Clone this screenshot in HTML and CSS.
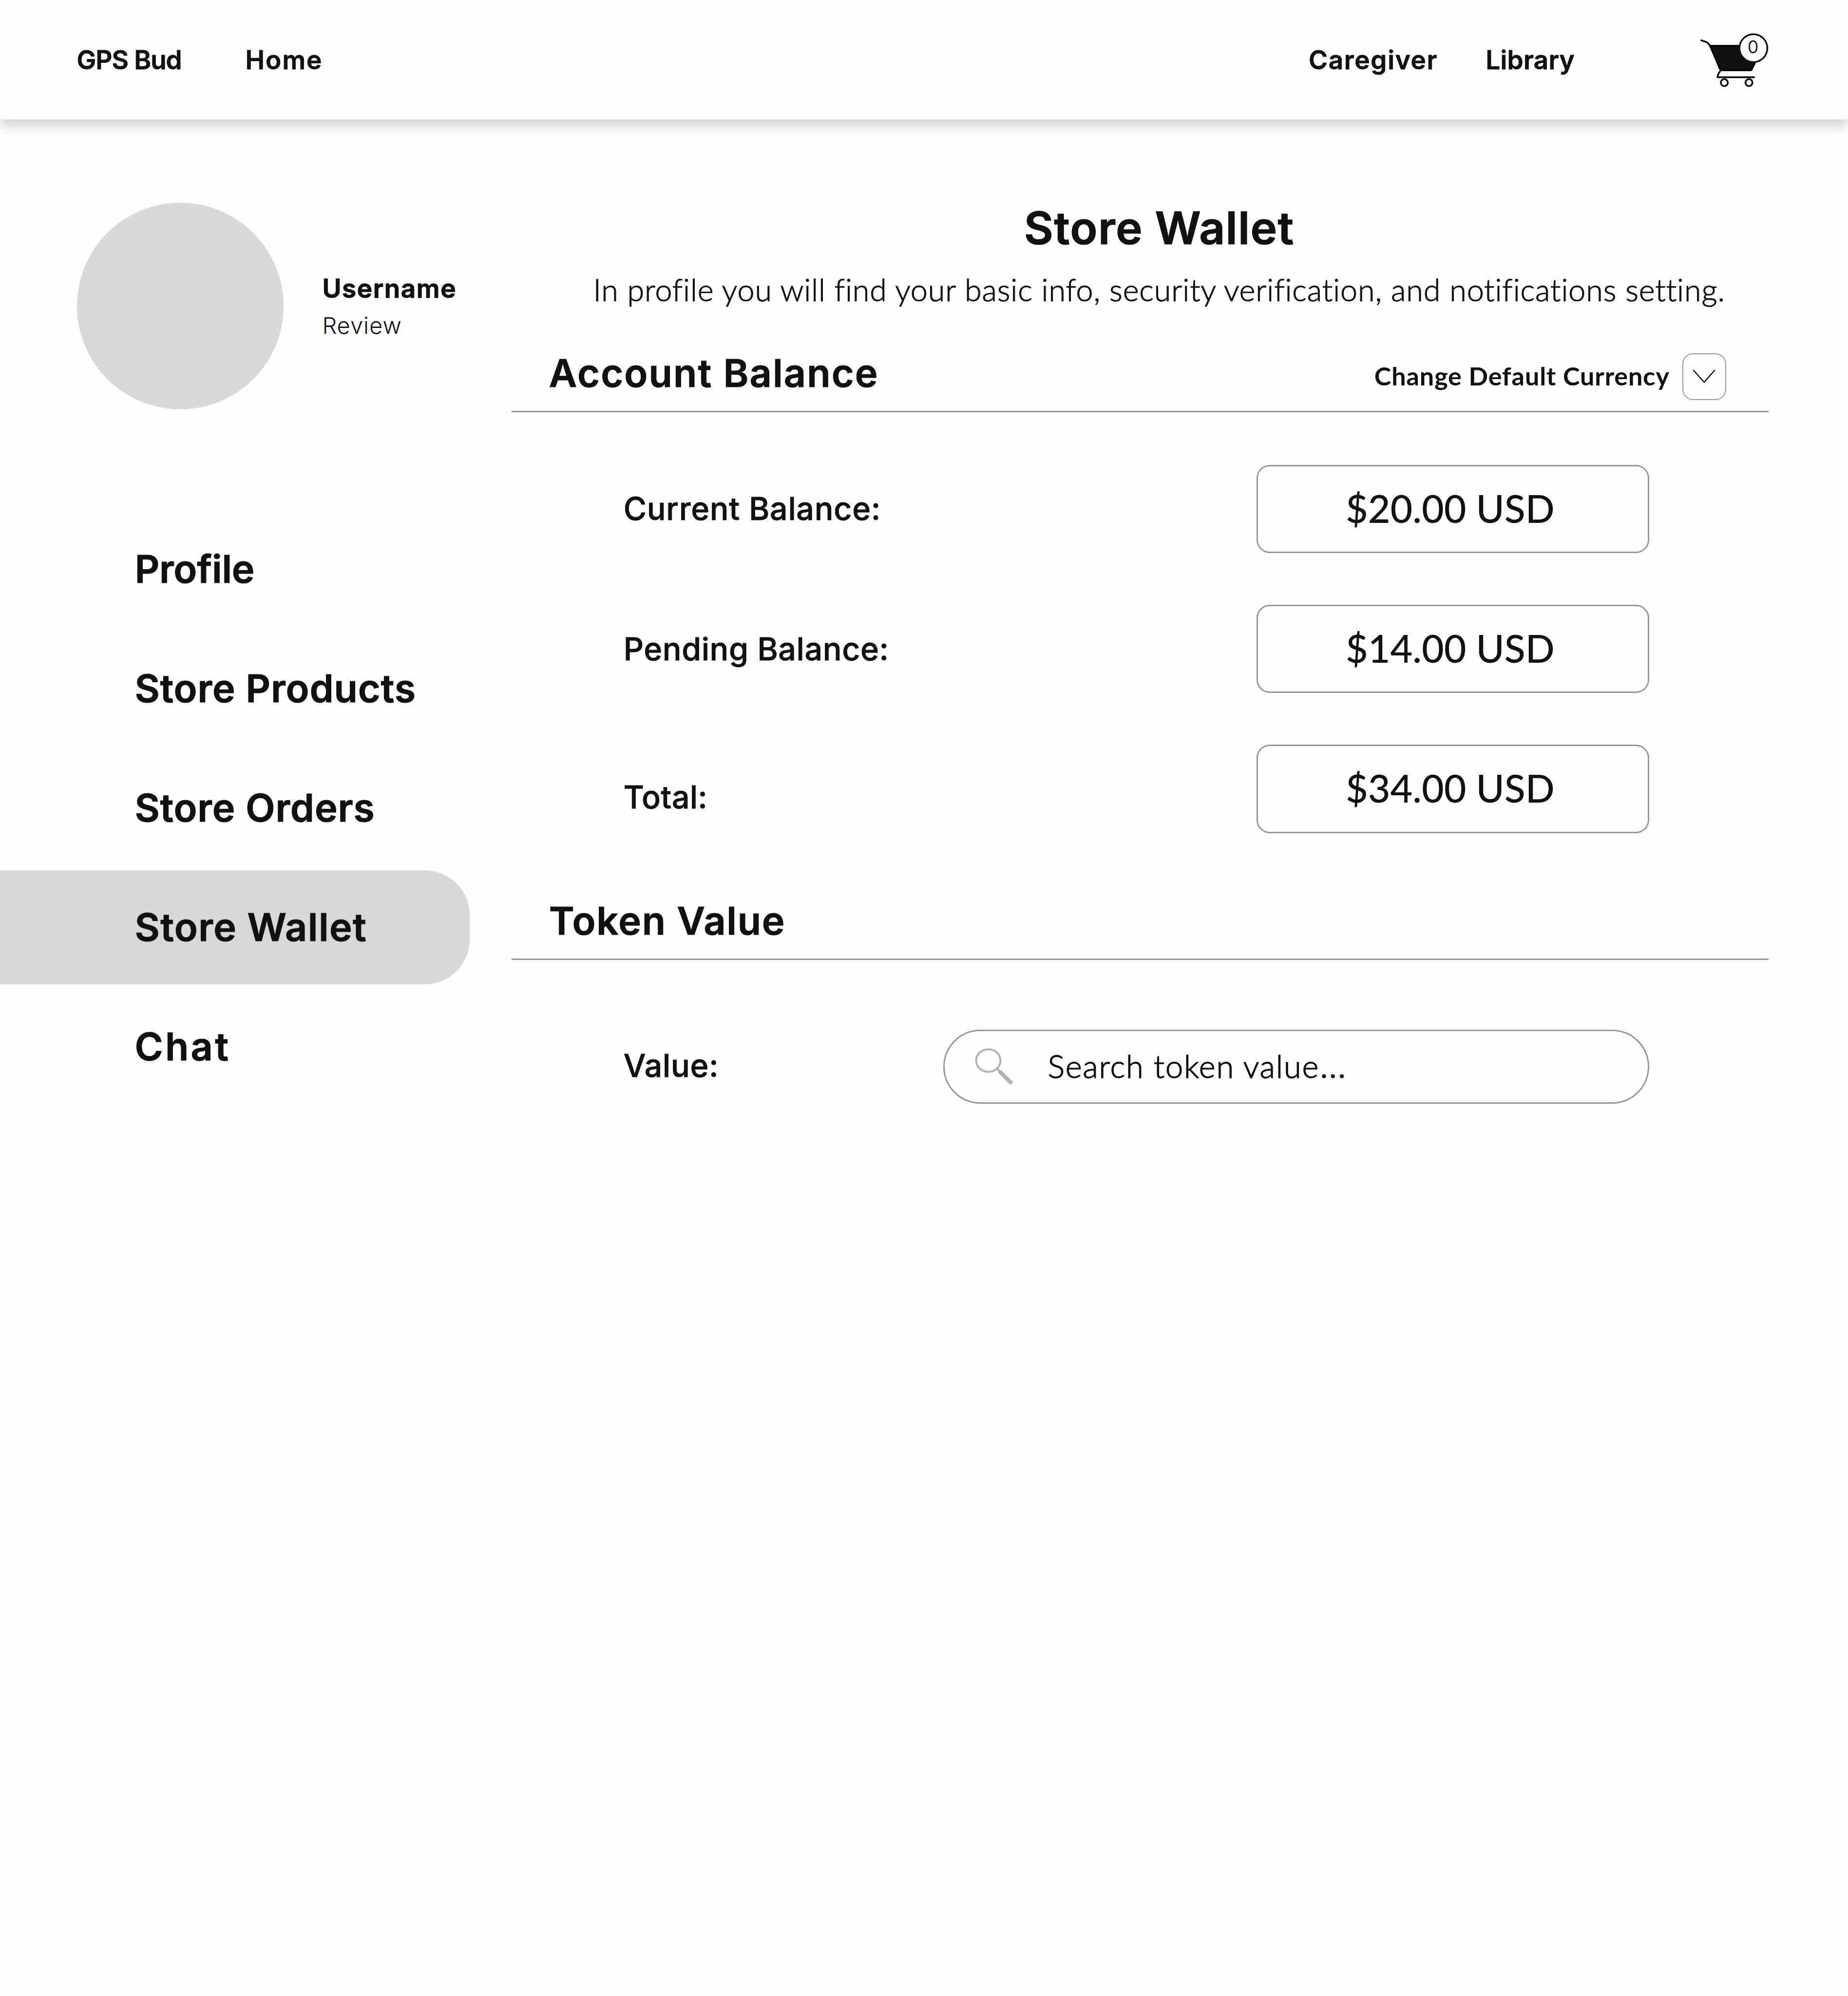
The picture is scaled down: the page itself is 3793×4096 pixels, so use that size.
FILE: index.html
```html
<!DOCTYPE html>
<html lang="en">
<head>
<meta charset="utf-8">
<title>Store Wallet</title>
<link rel="stylesheet" href="styles.css">
</head>
<body>
<header class="topbar">
  <a class="link brand">GPS Bud</a>
  <a class="link home">Home</a>
  <a class="link caregiver">Caregiver</a>
  <a class="link library">Library</a>
  <svg class="cart" viewBox="0 0 240 180">
    <path d="M58 57H182L155.5 112Q154.3 114.2 151 114.2H86Q82.500 114.200 81.500 112Z" fill="#111" stroke="#000" stroke-width="4.200" stroke-linejoin="round"/>
    <path d="M37.700 44.200L49.500 48.200Q53 49.500 58 57M83 114.500Q75.200 124 75.200 130.500H161" fill="none" stroke="#000" stroke-width="4" stroke-linecap="round" stroke-linejoin="round"/>
    <circle cx="91.300" cy="143" r="8.200" fill="#fff" stroke="#000" stroke-width="4"/>
    <circle cx="148.900" cy="143" r="8.200" fill="#fff" stroke="#000" stroke-width="4"/>
    <circle cx="159.300" cy="62.500" r="32.600" fill="#fff" stroke="#111" stroke-width="4"/>
    <text class="cart-count" x="158.600" y="74.600" text-anchor="middle">0</text>
  </svg>
</header>
<main class="page">
  <aside class="sidebar">
    <section class="user">
      <div class="avatar"></div>
      <div class="user-text">
        <div class="username">Username</div>
        <div class="review">Review</div>
      </div>
    </section>
    <nav class="menu">
      <a class="item profile">Profile</a>
      <a class="item products">Store Products</a>
      <a class="item orders">Store Orders</a>
      <a class="item wallet active">Store Wallet</a>
      <a class="item chat">Chat</a>
    </nav>
  </aside>
  <div class="content">
    <div class="intro">
      <h1 class="title">Store Wallet</h1>
      <p class="subtitle">In profile you will find your basic info, security verification, and notifications setting.</p>
    </div>
    <div class="section-head">
      <h2 class="heading account">Account Balance</h2>
      <div class="currency">
        <span class="currency-label">Change Default Currency</span>
        <button class="dropdown" aria-label="Choose currency">
          <svg class="chevron" viewBox="0 0 54 34"><path d="M2.500 2.500L27 30L51.500 2.500" fill="none" stroke="#111" stroke-width="2.800" stroke-linecap="round" stroke-linejoin="round"/></svg>
        </button>
      </div>
    </div>
    <div class="rows">
      <div class="row"><span class="label current">Current Balance:</span><span class="amount">$20.00 USD</span></div>
      <div class="row"><span class="label pending">Pending Balance:</span><span class="amount">$14.00 USD</span></div>
      <div class="row"><span class="label total">Total:</span><span class="amount">$34.00 USD</span></div>
    </div>
    <div class="section-head token-head">
      <h2 class="heading token">Token Value</h2>
    </div>
    <div class="row search-row">
      <span class="label value">Value:</span>
      <div class="search">
        <svg class="search-icon" viewBox="0 0 130 130">
          <ellipse cx="50.700" cy="48.300" rx="28.400" ry="26.400" fill="none" stroke="#b2b2b2" stroke-width="4.500"/>
          <path d="M72 68.500L80 76.500" stroke="#b2b2b2" stroke-width="5"/>
          <path d="M80.300 70L109 98.700L102.300 105.300L73.700 76.700Z" fill="#b2b2b2"/>
        </svg>
        <span class="placeholder">Search token value<span class="dots">…</span></span>
      </div>
    </div>
  </div>
</main>
</body>
</html>
```
FILE: styles.css
```css
* { box-sizing: border-box; }

body {
  margin: 0;
  min-height: 4096px;
  background: #fefefe;
  color: #111;
  font-family: Inter, "Liberation Sans", sans-serif;
}

h1, h2, p { margin: 0; }

/* Top bar */
.topbar {
  display: grid;
  grid-template-columns: 346.1px 1fr 363.2px 410.2px 210.7px;
  align-items: center;
  height: 245px;
  padding: 0 122.9px 0 157.5px;
  box-shadow: 0 13px 24px rgba(0, 0, 0, .18);
}
.link {
  padding-top: 2px;
  font-size: 53px;
  font-weight: 600;
  line-height: 63px;
  letter-spacing: -1px;
  white-space: nowrap;
  -webkit-text-stroke: .8px #111;
}
.home { letter-spacing: 2px; }
.caregiver { letter-spacing: 1.65px; }
.library { letter-spacing: .25px; }
.cart { display: block; width: 210.7px; height: 158px; }
.cart-count { font-size: 41px; font-weight: 300; fill: #111; stroke: #111; stroke-width: .5px; }

.page {
  display: grid;
  grid-template-columns: 1049.7px 2580px;
}

/* Sidebar */
.user {
  display: flex;
  align-items: center;
  gap: 79.6px;
  padding: 171.2px 0 0 157.8px;
}
.avatar {
  width: 424px;
  height: 424px;
  border-radius: 50%;
  background: #d8d8d8;
}
.user-text { padding-top: 5.4px; }
.username {
  font-size: 53px;
  font-weight: 600;
  line-height: 74px;
  letter-spacing: 1.6px;
  -webkit-text-stroke: 1.2px #111;
}
.review {
  font-size: 47px;
  font-weight: 300;
  line-height: 78px;
  letter-spacing: 1px;
}
.menu {
  display: flex;
  flex-direction: column;
  gap: 10.6px;
  margin-top: 210.7px;
}
.item {
  width: 964px;
  height: 234.4px;
  padding-left: 276.4px;
  font-size: 79px;
  font-weight: 600;
  line-height: 233px;
  white-space: nowrap;
  -webkit-text-stroke: 1px #111;
}
.active { background: #d8d8d8; border-radius: 0 92px 92px 0; }
.profile { letter-spacing: -.3px; }
.products { letter-spacing: .83px; }
.orders { letter-spacing: .78px; }
.wallet { letter-spacing: 1.38px; }
.chat { letter-spacing: 4.3px; }

/* Content */
.intro { padding: 167.6px 0 0 79px; text-align: center; }
.title {
  font-size: 92.5px;
  font-weight: 600;
  line-height: 109px;
  letter-spacing: 1.3px;
  -webkit-text-stroke: 1.2px #111;
}
.subtitle {
  margin-top: 32px;
  font-family: Lato, "Liberation Sans", sans-serif;
  font-size: 62.8px;
  font-weight: 300;
  line-height: 80px;
  letter-spacing: .9px;
  white-space: nowrap;
  -webkit-text-stroke: 1.1px #111;
}
.section-head {
  display: flex;
  align-items: center;
  justify-content: space-between;
  height: 153px;
  margin-top: 59.4px;
  padding: 0 86.8px 0 77px;
  border-bottom: 3px solid #979797;
}
.token-head { margin-top: 107.4px; }
.heading {
  padding-bottom: 6px;
  font-size: 79px;
  font-weight: 600;
  line-height: 96px;
  -webkit-text-stroke: 1px #111;
}
.account { letter-spacing: 2.1px; }
.token { letter-spacing: 1.75px; }
.currency {
  display: flex;
  align-items: center;
  gap: 26.5px;
  padding-top: 9.4px;
}
.currency-label {
  padding-bottom: 3.4px;
  font-family: Lato, "Liberation Sans", sans-serif;
  font-size: 52.1px;
  font-weight: 700;
  line-height: 64px;
  letter-spacing: .93px;
}
.dropdown {
  display: flex;
  align-items: center;
  justify-content: center;
  width: 89.6px;
  height: 95.7px;
  padding: 0;
  border: 2px solid #979797;
  border-radius: 22px;
  background: transparent;
}
.chevron { width: 47.4px; height: 29.8px; }

.rows {
  display: flex;
  flex-direction: column;
  gap: 105.8px;
  margin-top: 107.6px;
}
.row {
  display: flex;
  align-items: center;
  justify-content: space-between;
  padding: 0 245.2px 0 230px;
}
.label {
  font-size: 64.5px;
  font-weight: 500;
  line-height: 78px;
  -webkit-text-stroke: .8px #111;
}
.current { letter-spacing: .73px; }
.pending { letter-spacing: .62px; }
.total { padding-top: 35px; letter-spacing: .3px; }
.value { padding-bottom: 4px; letter-spacing: .7px; }
.amount {
  display: flex;
  align-items: center;
  justify-content: center;
  width: 805.8px;
  height: 181.5px;
  padding: 0 10.4px 4px 0;
  border: 3px solid #979797;
  border-radius: 27px;
  font-family: Lato, "Liberation Sans", sans-serif;
  font-size: 79px;
  font-weight: 500;
}
.search-row { margin-top: 142.5px; }
.search {
  display: flex;
  align-items: center;
  gap: 52px;
  width: 1448.5px;
  height: 152.8px;
  padding-left: 45.3px;
  border: 3px solid #979797;
  border-radius: 77px;
}
.search-icon { width: 114.1px; height: 114.1px; margin-top: 3.4px; }
.placeholder {
  padding-bottom: 3.4px;
  font-family: Lato, "Liberation Sans", sans-serif;
  font-size: 65px;
  font-weight: 300;
  line-height: 80px;
  letter-spacing: 1.8px;
  -webkit-text-stroke: 1.4px #111;
}
.dots { font-family: Inter, "Liberation Sans", sans-serif; line-height: 1; }
```
